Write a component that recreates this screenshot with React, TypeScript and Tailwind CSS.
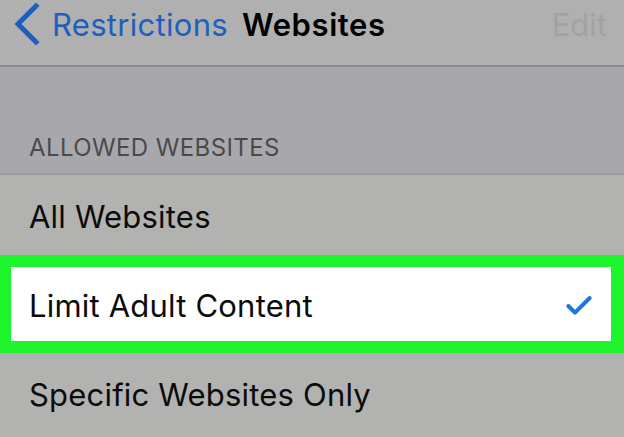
import { Check } from 'lucide-react';

function BackChevron() {
  return (
    <svg viewBox="0 0 28 42" width="28" height="42" className="shrink-0" aria-hidden="true">
      <path d="M24 3 L6 21 L24 39" fill="none" stroke="#1d5fbf" strokeWidth="5" strokeLinecap="square" />
    </svg>
  );
}

const rowText = "text-[31px] text-[#0b0b0b] tracking-[0.2px] pt-[4px]";

export default function App() {
  return (
    <div className="w-[624px] h-[437px] overflow-hidden bg-[#b2b2b1] font-['Inter','Liberation_Sans',sans-serif]">
      {/* Nav bar */}
      <div className="h-[67px] bg-[#b0b0b0] border-b-2 border-[#8c8c8c] flex items-start pt-[3px] pl-[12px] pr-[14px]">
        <BackChevron />
        <span className="ml-[12px] mt-[3px] text-[31px] text-[#1d5fbf] leading-[38px] tracking-[0.3px]">Restrictions</span>
        <span className="ml-[14px] mt-[3px] text-[31px] font-semibold text-black leading-[38px] tracking-[0.6px]">Websites</span>
        <span className="ml-auto mr-[3px] mt-[3px] text-[31px] text-[#a2a2a2] leading-[38px]">Edit</span>
      </div>

      {/* Section header */}
      <div className="h-[108px] bg-[#a8a8ac] border-b-2 border-[#9c9ca0] flex items-end pl-[29px] pb-[7px]">
        <span className="text-[24px] text-[#4a4a4c] tracking-[0.4px]">ALLOWED WEBSITES</span>
      </div>

      {/* Rows */}
      <div className="h-[80px] flex items-center pl-[29px]">
        <span className={rowText}>All Websites</span>
      </div>
      <div className="h-[98px] bg-[#1ff52f] pl-[11px] pr-[13px] py-[12px]">
        <div className="h-full bg-white flex items-center pl-[18px] pr-[16px]">
          <span className={rowText}>Limit Adult Content</span>
          <Check className="ml-auto mt-[4px] text-[#1f74e0]" size={32} strokeWidth={3} />
        </div>
      </div>
      <div className="h-[80px] flex items-center pl-[29px]">
        <span className={rowText}>Specific Websites Only</span>
      </div>
    </div>
  );
}
